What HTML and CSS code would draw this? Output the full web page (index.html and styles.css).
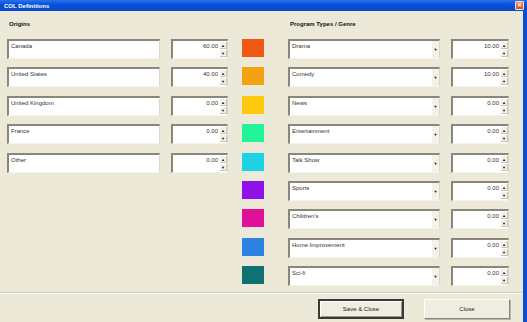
FILE: index.html
```html
<!DOCTYPE html>
<html>
<head>
   <meta http-equiv="Content-Type" content="text/html; charset=UTF-8" />
   <link rel="stylesheet" href="styles.css">
</head>
<body>

<div class="titlebar">
    <span class="title">COL Definitions</span>
    <span class="close">&#x2715;</span>
</div>

<div class="client">
    <div class="cols">

        <div class="col origins">
            <h2>Origins</h2>
            <div class="rows">
                <div class="row"><div class="text">Canada</div><div class="spin"><span>60.00</span><i class="btns"><b>&#9650;</b><b>&#9660;</b></i></div></div>
                <div class="row"><div class="text">United States</div><div class="spin"><span>40.00</span><i class="btns"><b>&#9650;</b><b>&#9660;</b></i></div></div>
                <div class="row"><div class="text">United Kingdom</div><div class="spin"><span>0.00</span><i class="btns"><b>&#9650;</b><b>&#9660;</b></i></div></div>
                <div class="row"><div class="text">France</div><div class="spin"><span>0.00</span><i class="btns"><b>&#9650;</b><b>&#9660;</b></i></div></div>
                <div class="row"><div class="text">Other</div><div class="spin"><span>0.00</span><i class="btns"><b>&#9650;</b><b>&#9660;</b></i></div></div>
            </div>
        </div>

        <div class="col swatches">
            <h2>&nbsp;</h2>
            <div class="rows">
                <div class="row"><div class="swatch" style="background:#f25a14"></div></div>
                <div class="row"><div class="swatch" style="background:#f5a212"></div></div>
                <div class="row"><div class="swatch" style="background:#ffc810"></div></div>
                <div class="row"><div class="swatch" style="background:#22f49c"></div></div>
                <div class="row"><div class="swatch" style="background:#1ed2e6"></div></div>
                <div class="row"><div class="swatch" style="background:#9010ea"></div></div>
                <div class="row"><div class="swatch" style="background:#e01098"></div></div>
                <div class="row"><div class="swatch" style="background:#2c82e0"></div></div>
                <div class="row"><div class="swatch" style="background:#0e7272"></div></div>
            </div>
        </div>

        <div class="col genres">
            <h2>Program Types / Genre</h2>
            <div class="rows">
                <div class="row"><div class="text combo">Drama<i class="drop">&#9660;</i></div><div class="spin"><span>10.00</span><i class="btns"><b>&#9650;</b><b>&#9660;</b></i></div></div>
                <div class="row"><div class="text combo">Comedy<i class="drop">&#9660;</i></div><div class="spin"><span>10.00</span><i class="btns"><b>&#9650;</b><b>&#9660;</b></i></div></div>
                <div class="row"><div class="text combo">News<i class="drop">&#9660;</i></div><div class="spin"><span>0.00</span><i class="btns"><b>&#9650;</b><b>&#9660;</b></i></div></div>
                <div class="row"><div class="text combo">Entertainment<i class="drop">&#9660;</i></div><div class="spin"><span>0.00</span><i class="btns"><b>&#9650;</b><b>&#9660;</b></i></div></div>
                <div class="row"><div class="text combo">Talk Show<i class="drop">&#9660;</i></div><div class="spin"><span>0.00</span><i class="btns"><b>&#9650;</b><b>&#9660;</b></i></div></div>
                <div class="row"><div class="text combo">Sports<i class="drop">&#9660;</i></div><div class="spin"><span>0.00</span><i class="btns"><b>&#9650;</b><b>&#9660;</b></i></div></div>
                <div class="row"><div class="text combo">Children's<i class="drop">&#9660;</i></div><div class="spin"><span>0.00</span><i class="btns"><b>&#9650;</b><b>&#9660;</b></i></div></div>
                <div class="row"><div class="text combo">Home Improvement<i class="drop">&#9660;</i></div><div class="spin"><span>0.00</span><i class="btns"><b>&#9650;</b><b>&#9660;</b></i></div></div>
                <div class="row"><div class="text combo">Sci-fi<i class="drop">&#9660;</i></div><div class="spin"><span>0.00</span><i class="btns"><b>&#9650;</b><b>&#9660;</b></i></div></div>
            </div>
        </div>

    </div>

    <div class="footer">
        <button class="button default">Save &amp; Close</button>
        <button class="button">Close</button>
    </div>
</div>

</body>
</html>
```

FILE: styles.css
```css
* {
    padding: 0; margin: 0;
    box-sizing: border-box;
    font-family: "Liberation Sans", Arial, sans-serif;
}
body {
    width: 527px;
    height: 322px;
    overflow: hidden;
    background-color: #ece9d8;
    font-size: 6px;
    color: #333;
}

/* window chrome */
div.titlebar {
    height: 11px;
    display: flex;
    align-items: center;
    justify-content: space-between;
    padding: 0 3px 0 4px;
    background: linear-gradient(#2a72ee, #0a52d6 40%, #0848cc);
}
span.title {
    color: #fff;
    font-weight: bold;
    font-size: 6px;
}
span.close {
    width: 9px;
    height: 9px;
    border: 1px solid #f4e2dc;
    border-radius: 1px;
    background: linear-gradient(#f08a6a, #d84a22);
    color: #fff;
    font-size: 6px;
    font-weight: bold;
    line-height: 7px;
    text-align: center;
}
div.client {
    height: 311px;
    border-right: 4px solid #0a4ed4;
}

/* columns */
div.cols {
    display: flex;
    padding: 10px 0 0 7px;
}
div.col h2 {
    font-size: 6px;
    font-weight: bold;
    color: #111;
    height: 18px;
    padding-left: 2px;
}
div.origins { width: 221px; }
div.swatches { width: 22px; margin-left: 14px; }
div.genres { width: 222px; margin-left: 24px; }

div.rows {
    display: flex;
    flex-direction: column;
    gap: 8.4px;
}
div.row {
    display: flex;
    gap: 11px;
    height: 20px;
}
div.swatch {
    width: 22px;
    height: 18px;
}

/* sunken fields */
div.text, div.spin {
    background-color: #fff;
    border-top: 2px solid #8a877a;
    border-left: 2px solid #8a877a;
    border-bottom: 1px solid #f4f3ee;
    border-right: 1px solid #dcd9c8;
    height: 20px;
}
div.text {
    width: 153px;
    padding: 2px 0 0 2px;
    position: relative;
}
div.combo { width: 152px; }
i.drop {
    position: absolute;
    right: 0;
    top: 0;
    bottom: 0;
    width: 7px;
    background-color: #f2f1ea;
    font-style: normal;
    font-size: 4px;
    line-height: 17px;
    text-align: center;
    color: #111;
}
div.spin {
    width: 57px;
    display: flex;
    justify-content: flex-end;
}
div.genres div.spin { width: 58px; }
div.spin span {
    padding: 2px 2px 0 0;
}
i.btns {
    width: 7px;
    display: flex;
    flex-direction: column;
    justify-content: space-between;
    padding: 1px 0;
    font-style: normal;
}
i.btns b {
    height: 7px;
    font-size: 4px;
    line-height: 7px;
    text-align: center;
    font-weight: normal;
    color: #111;
    background-color: #f2f1ea;
    border: 1px solid #c8c5b4;
    border-width: 0 1px 1px 0;
}

/* footer */
div.footer {
    margin-top: 6px;
    border-top: 1px solid #d4d0c0;
    box-shadow: inset 0 1px 0 #fff;
    display: flex;
    justify-content: flex-end;
    gap: 20px;
    padding: 6px 13px 0 0;
}
button.button {
    width: 86px;
    height: 20px;
    font-size: 6px;
    color: #222;
    background-color: #efede2;
    border: 1px solid #fff;
    border-right-color: #8a877a;
    border-bottom-color: #8a877a;
    box-shadow: 1px 1px 0 #b8b5a6;
}
button.default {
    border: 2px solid #3a3a34;
    box-shadow: inset 1px 1px 0 #fff, inset -1px -1px 0 #9a978a;
}
```
